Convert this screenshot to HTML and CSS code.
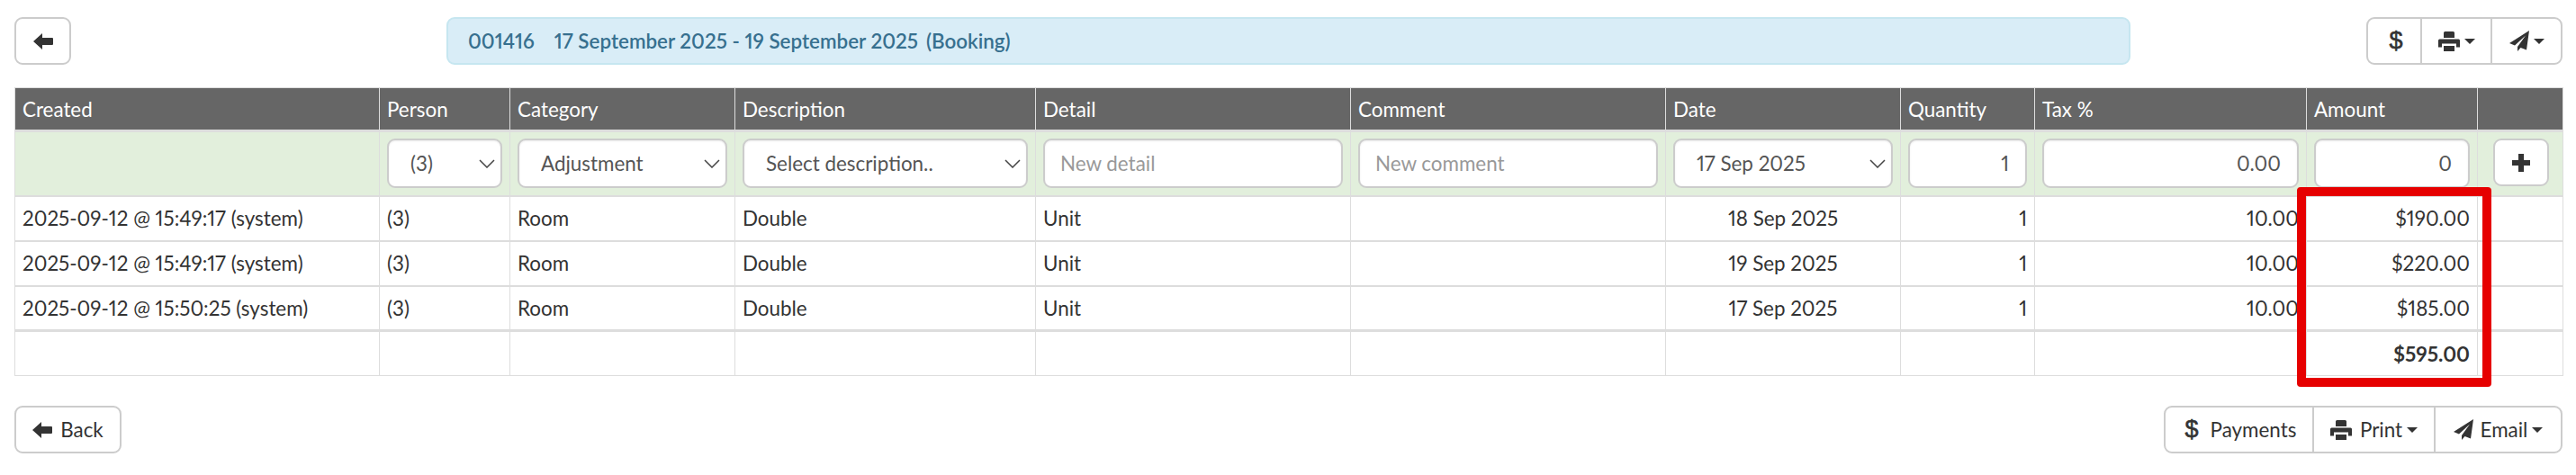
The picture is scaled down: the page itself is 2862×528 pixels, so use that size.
FILE: index.html
```
<!DOCTYPE html>
<html>
<head>
    <title>Booking charges</title>
    <meta charset="UTF-8">
    <link rel="stylesheet" href="styles.css">
</head>
<body>
    <svg class="icon-defs" width="0" height="0">
        <symbol id="i-arrow" viewBox="0 0 22 18"><path d="M0 9 L10 0 V5 H21 Q22 5 22 6 V12 Q22 13 21 13 H10 V18 Z"/></symbol>
        <symbol id="i-print" viewBox="0 0 24 22"><path d="M6 1.5 Q6 0 7.5 0 H16.5 Q18 0 18 1.5 V7 H6 Z M1.5 8.5 H22.5 Q24 8.5 24 10 V17.5 H20 V13.5 H4 V17.5 H0 V10 Q0 8.5 1.5 8.5 Z M6 16 H18 V22 H6 Z"/></symbol>
        <symbol id="i-send" viewBox="0 0 22 23"><path d="M22 0 L0 14 L6 16.5 L18 5.5 L9 18 V23 L12.5 19 L19 21.5 Z"/></symbol>
        <symbol id="i-plus" viewBox="0 0 20 20"><path d="M7 0 H13 V7 H20 V13 H13 V20 H7 V13 H0 V7 H7 Z"/></symbol>
    </svg>

    <div class="top-bar">
        <button class="btn btn-icon"><svg class="icon icon-arrow"><use href="#i-arrow"/></svg></button>
        <div class="booking-banner">
            <span class="booking-id">001416</span>
            <span class="booking-dates">17 September 2025 - 19 September 2025</span>
            <span>(Booking)</span>
        </div>
        <div class="btn-group">
            <button class="btn btn-money"><span class="dollar">$</span></button>
            <button class="btn btn-print"><svg class="icon icon-print"><use href="#i-print"/></svg><span class="caret"></span></button>
            <button class="btn btn-send"><svg class="icon icon-send"><use href="#i-send"/></svg><span class="caret"></span></button>
        </div>
    </div>

    <table class="charges">
        <thead>
            <tr>
                <th class="col-created">Created</th>
                <th class="col-person">Person</th>
                <th class="col-category">Category</th>
                <th class="col-description">Description</th>
                <th class="col-detail">Detail</th>
                <th class="col-comment">Comment</th>
                <th class="col-date">Date</th>
                <th class="col-quantity">Quantity</th>
                <th class="col-tax">Tax %</th>
                <th class="col-amount">Amount</th>
                <th class="col-action"></th>
            </tr>
        </thead>
        <tbody>
            <tr class="new-row">
                <td></td>
                <td><select class="field"><option>(3)</option></select></td>
                <td><select class="field"><option>Adjustment</option></select></td>
                <td><select class="field"><option>Select description..</option></select></td>
                <td><input class="field" type="text" placeholder="New detail"></td>
                <td><input class="field" type="text" placeholder="New comment"></td>
                <td><select class="field"><option>17 Sep 2025</option></select></td>
                <td><input class="field num" type="text" value="1"></td>
                <td><input class="field num" type="text" value="0.00"></td>
                <td><input class="field num" type="text" value="0"></td>
                <td><button class="btn btn-add"><svg class="icon icon-plus"><use href="#i-plus"/></svg></button></td>
            </tr>
            <tr>
                <td>2025-09-12 @ 15:49:17 (system)</td><td>(3)</td><td>Room</td><td>Double</td><td>Unit</td><td></td>
                <td class="center">18 Sep 2025</td><td class="right">1</td><td class="right">10.00</td><td class="right">$190.00</td><td></td>
            </tr>
            <tr>
                <td>2025-09-12 @ 15:49:17 (system)</td><td>(3)</td><td>Room</td><td>Double</td><td>Unit</td><td></td>
                <td class="center">19 Sep 2025</td><td class="right">1</td><td class="right">10.00</td><td class="right">$220.00</td><td></td>
            </tr>
            <tr>
                <td>2025-09-12 @ 15:50:25 (system)</td><td>(3)</td><td>Room</td><td>Double</td><td>Unit</td><td></td>
                <td class="center">17 Sep 2025</td><td class="right">1</td><td class="right">10.00</td><td class="right">$185.00</td><td></td>
            </tr>
        </tbody>
        <tfoot>
            <tr>
                <td></td><td></td><td></td><td></td><td></td><td></td><td></td><td></td><td></td>
                <td class="right total">$595.00<div class="highlight"></div></td><td></td>
            </tr>
        </tfoot>
    </table>

    <div class="bottom-bar">
        <button class="btn btn-back"><svg class="icon icon-arrow"><use href="#i-arrow"/></svg>Back</button>
        <div class="btn-group">
            <button class="btn btn-payments"><span class="dollar">$</span>Payments</button>
            <button class="btn btn-print-label"><svg class="icon icon-print"><use href="#i-print"/></svg>Print<span class="caret"></span></button>
            <button class="btn btn-email"><svg class="icon icon-send"><use href="#i-send"/></svg>Email<span class="caret"></span></button>
        </div>
    </div>
</body>
</html>
```

FILE: styles.css
```
body {
    font-family: Lato, "Liberation Sans", sans-serif;
    font-size: 22.4px;
    font-variant-numeric: proportional-nums;
    color: #333;
    margin: 0;
    padding: 19px 15px 0 16px;
    background: #fff;
}
.icon-defs {
    display: block;
    height: 0;
}
.icon {
    fill: #333;
    display: inline-block;
}
.icon-arrow {
    width: 22px;
    height: 18px;
}
.icon-print {
    width: 24px;
    height: 22px;
}
.icon-send {
    width: 22px;
    height: 23px;
}
.icon-plus {
    width: 20px;
    height: 20px;
}
.dollar {
    font-family: "Liberation Sans", sans-serif;
    font-size: 27px;
    -webkit-text-stroke: .6px #333;
}
.caret {
    display: inline-block;
    margin-left: 5px;
    border-top: 6px solid #333;
    border-left: 6px solid transparent;
    border-right: 6px solid transparent;
}

/* buttons */
.btn {
    font-family: inherit;
    font-size: 22.4px;
    color: #333;
    background: #fff;
    border: 2px solid #ccc;
    border-radius: 9px;
    height: 53px;
    padding: 0;
    display: inline-flex;
    align-items: center;
    justify-content: center;
    box-sizing: border-box;
}
.btn-group {
    display: flex;
}
.btn-group .btn {
    border-radius: 0;
    margin-left: -2px;
}
.btn-group .btn:first-child {
    border-radius: 9px 0 0 9px;
    margin-left: 0;
}
.btn-group .btn:last-child {
    border-radius: 0 9px 9px 0;
}

/* top row */
.top-bar {
    display: flex;
    align-items: flex-start;
    height: 78px;
}
.btn-icon {
    width: 63px;
}
.booking-banner {
    margin-left: 417px;
    width: 1871px;
    height: 53px;
    box-sizing: border-box;
    background: #d9edf7;
    border: 2px solid #c6e6f0;
    border-radius: 9px;
    color: #37708f;
    font-size: 22.4px;
    font-weight: 600;
    padding-left: 22px;
    display: flex;
    align-items: center;
}
.booking-id {
    margin-right: 22px;
}
.booking-dates {
    margin-right: 9px;
}
.top-bar .btn-group {
    margin-left: auto;
}
.btn-money {
    width: 62px;
    padding-left: 4px;
}
.btn-print, .btn-send {
    width: 80px;
}

/* table */
.charges {
    border-collapse: collapse;
    table-layout: fixed;
    width: 2831px;
}
.charges th {
    background: #666;
    color: #fff;
    font-size: 22.4px;
    font-weight: normal;
    text-align: left;
    height: 48px;
    padding: 0 8px;
    border: 1px solid #ddd;
    border-bottom: 3px solid #ddd;
    box-sizing: border-box;
}
.charges td {
    height: 50px;
    padding: 0 8px;
    border: 1px solid #ddd;
    border-top-width: 2px;
    box-sizing: border-box;
}
.col-created { width: 405px; }
.col-person { width: 145px; }
.col-category { width: 250px; }
.col-description { width: 334px; }
.col-detail { width: 350px; }
.col-comment { width: 350px; }
.col-date { width: 261px; }
.col-quantity { width: 149px; }
.col-tax { width: 302px; }
.col-amount { width: 190px; }
.col-action { width: 95px; }
.center {
    text-align: center;
}
.right {
    text-align: right;
}
.new-row td {
    background: #e2efdc;
    height: 72px;
    border-top: none;
}
.field {
    font-family: inherit;
    font-size: 22.4px;
    font-variant-numeric: inherit;
    color: #555;
    width: 100%;
    height: 55px;
    box-sizing: border-box;
    background: #fff;
    border: 2px solid #ccc;
    border-radius: 9px;
    padding: 0 18px 0 17px;
    box-shadow: inset 0 1px 2px rgba(0, 0, 0, .08);
    display: block;
}
select.field {
    appearance: none;
    padding-left: 24px;
    background-image: url("data:image/svg+xml,%3Csvg xmlns='http://www.w3.org/2000/svg' width='18' height='10'%3E%3Cpath d='M1 1 L9 9 L17 1' fill='none' stroke='%23444' stroke-width='1.5'/%3E%3C/svg%3E");
    background-repeat: no-repeat;
    background-position: right 6px center;
}
.field::placeholder {
    color: #999;
}
.num {
    text-align: right;
}
.btn-add {
    width: 62px;
    height: 53px;
    margin-left: 9px;
    margin-top: -2px;
    display: flex;
}
.charges tfoot td {
    border-top: 3px solid #ddd;
    height: 50px;
}
.total {
    font-weight: bold;
    position: relative;
}
/* red marker drawn over the amount column */
.highlight {
    position: absolute;
    left: -11px;
    right: -16px;
    bottom: -13px;
    height: 222px;
    border: 10px solid #e60000;
    border-radius: 4px;
    box-sizing: border-box;
    pointer-events: none;
}

/* bottom row */
.bottom-bar {
    display: flex;
    justify-content: space-between;
    margin-top: 33px;
}
.btn-back {
    width: 119px;
}
.btn-back .icon {
    margin-right: 9px;
}
.btn-payments {
    width: 167px;
    padding-left: 4px;
}
.btn-payments .dollar {
    margin-right: 13px;
}
.btn-print-label {
    width: 137px;
}
.btn-email {
    width: 143px;
}
.btn-print-label .icon {
    margin-right: 9px;
}
.btn-email .icon {
    margin-right: 8px;
}
```
